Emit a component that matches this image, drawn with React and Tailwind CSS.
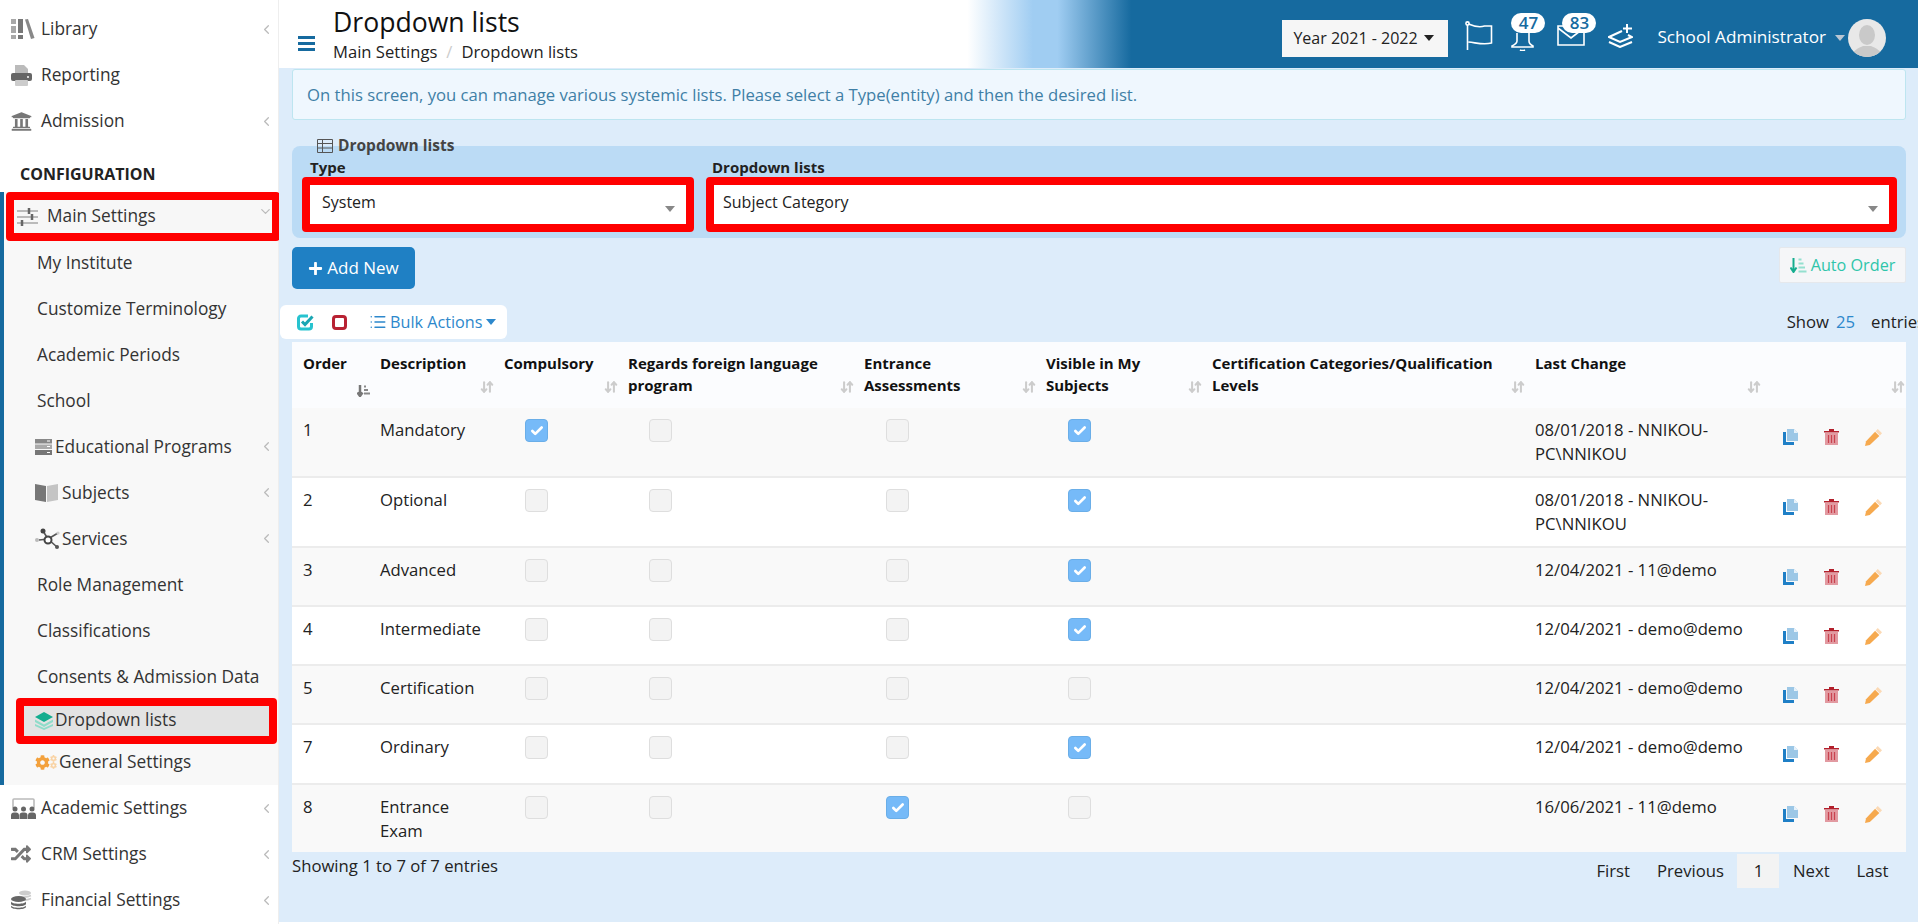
import { ChevronLeft, ChevronDown, Check, List, ArrowDownUp } from "lucide-react";
import { FaUniversity, FaRandom, FaPlus, FaCog } from "react-icons/fa";

const rows = [
  { order: 1, desc: "Mandatory", compulsory: true, visible: true, change: "08/01/2018 - NNIKOU- PC\\NNIKOU", h: "h-[69px]" },
  { order: 2, desc: "Optional", visible: true, change: "08/01/2018 - NNIKOU- PC\\NNIKOU", h: "h-[70px]" },
  { order: 3, desc: "Advanced", visible: true, change: "12/04/2021 - 11@demo", h: "h-[59px]" },
  { order: 4, desc: "Intermediate", visible: true, change: "12/04/2021 - demo@demo", h: "h-[59px]" },
  { order: 5, desc: "Certification", change: "12/04/2021 - demo@demo", h: "h-[59px]" },
  { order: 7, desc: "Ordinary", visible: true, change: "12/04/2021 - demo@demo", h: "h-[60px]" },
  { order: 8, desc: "Entrance Exam", entrance: true, change: "16/06/2021 - 11@demo", h: "h-[68px]" },
];

const headers = [
  { label: "Order", cls: "pl-[11px]", active: true },
  { label: "Description" },
  { label: "Compulsory" },
  { label: "Regards foreign language program" },
  { label: "Entrance Assessments" },
  { label: "Visible in My Subjects" },
  { label: "Certification Categories/Qualification Levels" },
  { label: "Last Change" },
  { label: "" },
];

function Box({ on }) {
  return on ? (
    <span className="flex size-[23px] items-center justify-center rounded-[4px] border border-[#6aaee8] bg-[#76baf8] text-white">
      <Check size={14} strokeWidth={4.5} />
    </span>
  ) : (
    <span className="block size-[23px] rounded-[4px] border border-[#dedede] bg-[#f3f3f3]" />
  );
}

function LibraryIcon() {
  return (
    <svg width="24" height="22" viewBox="0 0 24 22">
      <rect x="0" y="1" width="5" height="20" fill="#a8a8a8" />
      <rect x="0" y="6" width="5" height="2" fill="#fff" />
      <rect x="0" y="15" width="5" height="2" fill="#fff" />
      <rect x="7" y="1" width="5" height="20" fill="#777" />
      <rect x="7" y="15" width="5" height="2" fill="#fff" />
      <path d="M14 1.5 17 1 23.5 20 20 21Z" fill="#888" />
    </svg>
  );
}

function PrinterIcon() {
  return (
    <svg width="21" height="21" viewBox="0 0 21 21">
      <path d="M4 0h9l4 4v5H4Z" fill="#bbb" />
      <rect x="0" y="8" width="21" height="8" rx="2" fill="#666" />
      <rect x="4" y="15" width="13" height="6" rx="1" fill="#ccc" />
      <circle cx="17" cy="12" r="1" fill="#fff" />
    </svg>
  );
}

function SlidersIcon() {
  return (
    <svg width="21" height="18" viewBox="0 0 21 18">
      <path d="M0 3h21M0 9h21M0 15h21" stroke="#bbb" strokeWidth="2" />
      <path d="M12 0v6M15 6v6M5 12v6" stroke="#666" strokeWidth="2.5" />
    </svg>
  );
}

function ServerIcon() {
  return (
    <svg width="17" height="16" viewBox="0 0 17 16">
      <rect y="0" width="17" height="4.5" fill="#888" />
      <rect y="5.5" width="17" height="4.5" fill="#aaa" />
      <rect y="11" width="17" height="5" fill="#777" />
      <path d="M12 2h3M12 7.5h3M12 13.5h3" stroke="#fff" strokeWidth="1" />
    </svg>
  );
}

function BookIcon() {
  return (
    <svg width="23" height="19" viewBox="0 0 23 19">
      <path d="M0 1 11 3v16L0 17Z" fill="#777" />
      <path d="M12 3 23 1v16l-11 2Z" fill="#c4c4c4" />
    </svg>
  );
}

function NodesIcon() {
  return (
    <svg width="25" height="21" viewBox="0 0 25 21">
      <path d="M8 3 13 11 22 19M13 11 4 12M13 11 23 5" stroke="#555" strokeWidth="1.6" fill="none" />
      <circle cx="2" cy="12" r="2" fill="#bbb" />
      <circle cx="8" cy="3" r="2.5" fill="#444" />
      <circle cx="13" cy="12" r="3.5" fill="#fff" stroke="#444" strokeWidth="2" />
      <circle cx="22" cy="19" r="2" fill="#555" />
      <circle cx="23" cy="5" r="1.6" fill="#ccc" />
    </svg>
  );
}

function LayersIcon() {
  return (
    <svg width="18" height="18" viewBox="0 0 18 18">
      <path d="M9 0 18 5 9 10 0 5Z" fill="#14ad8f" />
      <path d="M0 7.500 9 12.500 18 7.500V10L9 15 0 10Z" fill="#8fdcc9" />
      <path d="M0 12 9 16 18 12V14L9 18 0 14Z" fill="#8fdcc9" />
    </svg>
  );
}

function GearsIcon() {
  return (
    <span className="flex items-center">
      <FaCog size={15} className="text-[#f3a13c]" />
      <span className="flex flex-col">
        <FaCog size={7} className="text-[#f9d3a4]" />
        <FaCog size={7} className="text-[#f9d3a4]" />
      </span>
    </span>
  );
}

function GroupIcon() {
  return (
    <svg width="25" height="21" viewBox="0 0 25 21">
      <path d="M2 10V2a1 1 0 0 1 1-1h19a1 1 0 0 1 1 1v8" fill="none" stroke="#bbb" strokeWidth="1.6" />
      {[4, 12.5, 21].map((x) => (
        <g key={x} fill="#666">
          <circle cx={x} cy="11" r="2.5" />
          <path d={`M${x - 4} 21v-3.5a3 3 0 0 1 3-3h2a3 3 0 0 1 3 3V21Z`} />
        </g>
      ))}
    </svg>
  );
}

function CoinsIcon() {
  return (
    <svg width="21" height="20" viewBox="0 0 21 20">
      <ellipse cx="14" cy="3" rx="6" ry="2.5" fill="#ccc" />
      <path d="M8 6.500c2 1 8 1 12-1M8 9.500c2 1 8 1 12-1" stroke="#ccc" strokeWidth="1.6" fill="none" />
      <ellipse cx="7.500" cy="9" rx="7.500" ry="3" fill="#666" />
      <path d="M0 11.500c1 3 14 3 15 0v2.500c-1 3-14 3-15 0ZM0 15.500c1 3 14 3 15 0V17c-1 3-14 3-15 0Z" fill="#666" />
    </svg>
  );
}

function CopyIcon() {
  return (
    <svg width="15" height="16" viewBox="0 0 15 16">
      <path d="M0 3h3v10h8v3H0Z" fill="#1f7fc6" />
      <path d="M4 0h7l4 4v8H4Z" fill="#9cc7e6" />
      <path d="M11 0l4 4h-4Z" fill="#e8f2fa" />
    </svg>
  );
}

function TrashIcon() {
  return (
    <svg width="15" height="16" viewBox="0 0 15 16">
      <path d="M0 2h5V0h5v2h5v1.600H0Z" fill="#b3202c" />
      <path d="M1 4h13v12H1Z" fill="#e29aa1" />
      <path d="M4.500 6v8M7.500 6v8M10.500 6v8" stroke="#c9434f" strokeWidth="1.2" />
    </svg>
  );
}

function PencilIcon() {
  return (
    <svg width="17" height="17" viewBox="0 0 16 16">
      <path d="M12 0l4 4-2 2-4-4Z" fill="#fbd9b5" />
      <path d="M9.500 2.500l4 4L4.500 15 0 16l1-4.500Z" fill="#f6a94e" />
    </svg>
  );
}

function BulkCheck() {
  return (
    <svg width="17" height="17" viewBox="0 0 17 17" fill="none">
      <path d="M11 2H4a2.500 2.500 0 0 0-2.500 2.500v8A2.500 2.500 0 0 0 4 15h8a2.500 2.500 0 0 0 2.500-2.500V9" stroke="#27c3cf" strokeWidth="3" />
      <path d="M5 7.500 8 10.500 15.500 2.500" stroke="#1aa6b3" strokeWidth="3" />
    </svg>
  );
}

function SortDown() {
  return (
    <svg width="13" height="12" viewBox="0 0 13 12">
      <path d="M3 0v10M0.500 7.500 3 11l2.500-3.500" stroke="#777" strokeWidth="2.500" fill="none" />
      <path d="M7 1.500h2M7 5h4M7 8.500h6" stroke="#888" strokeWidth="2" />
    </svg>
  );
}

function AutoOrderIcon() {
  return (
    <svg width="17" height="15" viewBox="0 0 17 15">
      <path d="M3.500 0v13M0.500 9.500 3.500 14l3-4.500" stroke="#14ad8f" strokeWidth="2" fill="none" />
      <path d="M8.500 1.500h3M8.500 5.500h5M8.500 9.500h6.500M8.500 13.500h8" stroke="#94e0cf" strokeWidth="1.800" />
    </svg>
  );
}

function Caret({ cls }) {
  return <span className={`h-0 w-0 border-x-[5px] border-t-[6px] border-x-transparent ${cls}`} />;
}

function TopItem({ label, icon, chevron }) {
  return (
    <div className="flex h-[46px] items-center pl-[11px]">
      <span className="flex w-[30px] shrink-0 items-center">{icon}</span>
      <span>{label}</span>
      {chevron && <ChevronLeft size={15} className="ml-auto mr-[4px] text-[#bbb]" />}
    </div>
  );
}

function SubItem({ label, icon, chevron, textGap = "w-[20px]" }) {
  return (
    <div className="flex h-[46px] items-center pl-[31px]">
      {icon ? (
        <span className={`flex shrink-0 items-center ${textGap}`}>{icon}</span>
      ) : (
        <span className="w-[2px]" />
      )}
      <span>{label}</span>
      {chevron && <ChevronLeft size={15} className="ml-auto mr-[4px] text-[#bbb]" />}
    </div>
  );
}

function Sidebar() {
  return (
    <aside className="w-[279px] shrink-0 border-r border-[#eee] pt-[6px] text-[17.3px] text-[#333]">
      <TopItem label="Library" icon={<LibraryIcon />} chevron />
      <TopItem label="Reporting" icon={<PrinterIcon />} />
      <TopItem label="Admission" icon={<FaUniversity size={21} className="text-[#777]" />} chevron />
      <div className="flex h-[48px] items-center pl-[20px] pt-[12px] text-[16px] font-bold text-[#222]">CONFIGURATION</div>

      <div className="h-[593px] border-l-4 border-[#166a9f] bg-[#f8f8f8]">
        <div className="ml-[2px] mr-[-2px] flex h-[49px] items-center rounded-[4px] border-[8px] border-[#ff0000] bg-[#f7f7f7] pl-[3px]">
          <span className="w-[30px]"><SlidersIcon /></span>
          <span className="-translate-y-[1px]">Main Settings</span>
          <ChevronDown size={15} className="ml-auto mr-[-1px] -translate-y-[5px] text-[#bbb]" />
        </div>
        <div className="-mt-[1.5px]">
          <SubItem label="My Institute" />
          <SubItem label="Customize Terminology" />
          <SubItem label="Academic Periods" />
          <SubItem label="School" />
          <SubItem label="Educational Programs" icon={<ServerIcon />} chevron />
          <SubItem label="Subjects" icon={<BookIcon />} textGap="w-[27px]" chevron />
          <SubItem label="Services" icon={<NodesIcon />} textGap="w-[27px]" chevron />
          <SubItem label="Role Management" />
          <SubItem label="Classifications" />
          <SubItem label="Consents & Admission Data" />
        </div>
        <div className="ml-[12px] -mt-[1.5px] flex h-[46px] w-[261px] items-center rounded-[4px] border-[8px] border-[#ff0000] bg-[#e3e3e3] pl-[11px]">
          <span className="w-[20px]"><LayersIcon /></span>
          <span className="-translate-y-[1px]">Dropdown lists</span>
        </div>
        <div className="flex h-[40px] items-center pb-[4px] pl-[31px]">
          <span className="w-[24px]"><GearsIcon /></span>
          <span>General Settings</span>
        </div>
      </div>

      <TopItem label="Academic Settings" icon={<GroupIcon />} chevron />
      <TopItem label="CRM Settings" icon={<FaRandom size={20} className="text-[#777]" />} chevron />
      <TopItem label="Financial Settings" icon={<CoinsIcon />} chevron />
    </aside>
  );
}

function Header() {
  return (
    <header className="flex h-[68px] items-center bg-[linear-gradient(90deg,#fff_42%,#a0cdf2_46%,#a0cdf2_47.5%,#166a9f_52%)] pl-[19px]">
      <div className="mt-[18px] flex h-[15px] w-[17px] flex-col justify-between">
        <span className="h-[3px] bg-[#166a9f]" />
        <span className="h-[3px] bg-[#166a9f]" />
        <span className="h-[3px] bg-[#166a9f]" />
      </div>
      <div className="ml-[18px] flex h-full flex-col">
        <h1 className="mt-[4px] text-[26.6px] leading-[36px] text-[#111]">Dropdown lists</h1>
        <div className="flex text-[16.6px] leading-[24px] text-[#222]">
          <span>Main Settings</span>
          <span className="px-[9px] text-[#ccc]">/</span>
          <span>Dropdown lists</span>
        </div>
      </div>
      <div className="ml-auto mt-[8px] flex items-center pr-[32px]">
        <div className="flex h-[37px] w-[166px] items-center justify-between bg-[#f6f6f6] pl-[11px] pr-[14px] text-[16px] text-[#222]">
          <span>Year 2021 - 2022</span>
          <Caret cls="border-t-[#222]" />
        </div>
        <svg width="28" height="29" viewBox="0 0 28 29" className="ml-[17px] -mt-[6px]" fill="none" stroke="#fff" strokeWidth="1.6">
          <circle cx="2.500" cy="2.500" r="1.6" />
          <path d="M2.500 4v25M3.500 3c7 3 13 3 16 2l7 0v17c-8 2-14 0-23-1" />
        </svg>
        <div className="relative ml-[17px] h-[28px] w-[36px]">
          <svg width="25" height="21" viewBox="0 0 25 21" className="mt-[6px]" fill="none" stroke="#fff" strokeWidth="1.6">
            <path d="M7 3v8c0 2-3 4-5 5v1h21v-1c-2-1-4-3-4-5V3M10 20c2 1 3 1 5 0" />
          </svg>
          <span className="absolute left-[1px] top-[-11px] flex h-[20px] w-[34px] items-center justify-center rounded-full bg-white text-[17px] font-semibold text-[#166a9f]">47</span>
        </div>
        <div className="relative ml-[11px] h-[28px] w-[39px]">
          <svg width="28" height="21" viewBox="0 0 28 21" className="mt-[1px]" fill="none" stroke="#fff" strokeWidth="1.6">
            <path d="M1 1h26v19H1ZM1 3l13 10L27 3" />
          </svg>
          <span className="absolute left-[5px] top-[-11px] flex h-[20px] w-[34px] items-center justify-center rounded-full bg-white text-[17px] font-semibold text-[#166a9f]">83</span>
        </div>
        <svg width="25" height="24" viewBox="0 0 25 24" className="ml-[12px] -mt-[4px]" fill="none" stroke="#fff" strokeWidth="2">
          <path d="M19 0v9M15 4.500h9M14 7 1 13l11 5 12-5-4-2M1 18l11 5 12-5" />
        </svg>
        <span className="ml-[24px] -mt-[2px] text-[17.2px] text-white">School Administrator</span>
        <Caret cls="ml-[9px] border-t-[#b9c6d3]" />
        <span className="ml-[3px] flex size-[38px] items-end justify-center overflow-hidden rounded-full bg-[#e8e8e8]">
          <svg width="30" height="33" viewBox="0 0 30 33" fill="#c9c9c9">
            <ellipse cx="15" cy="11" rx="8" ry="10" />
            <path d="M0 33c0-7 7-9 11-11h8c4 2 11 4 11 11Z" />
          </svg>
        </span>
      </div>
    </header>
  );
}

function FilterPanel() {
  return (
    <section className="mt-[26px] flow-root h-[92px] rounded-[8px] bg-[#bbdbf5] pl-[10px] pr-[9px]">
      <div className="-mt-[11px] ml-[15px] flex h-[22px] items-center text-[15.5px] font-bold text-[#444]">
        <svg width="16" height="14" viewBox="0 0 16 14" fill="none" stroke="#555" strokeWidth="1" className="mr-[5px]">
          <path d="M.5.500h15v13H.5ZM.5 4.500h15M.5 9h15M5.500 .5v13" />
        </svg>
        Dropdown lists
      </div>
      <div className="grid grid-cols-[392px_1fr] gap-x-[12px]">
        <div className="pl-[8px] text-[15px] font-bold leading-[20px] text-[#222]">Type</div>
        <div className="pl-[6px] text-[15px] font-bold leading-[20px] text-[#222]">Dropdown lists</div>
        <div className="flex h-[55px] items-center justify-between rounded-[4px] border-[8px] border-[#ff0000] bg-white pl-[12px] pr-[11px] text-[16px] text-[#222]">
          <span className="-translate-y-[3px]">System</span>
          <Caret cls="translate-y-[4px] border-t-[#888]" />
        </div>
        <div className="flex h-[55px] items-center justify-between rounded-[4px] border-[8px] border-[#ff0000] bg-white pl-[9px] pr-[11px] text-[16px] text-[#222]">
          <span className="-translate-y-[3px]">Subject Category</span>
          <Caret cls="translate-y-[4px] border-t-[#888]" />
        </div>
      </div>
    </section>
  );
}

function DataTable() {
  return (
    <table className="mt-[3px] w-full table-fixed border-collapse text-[16.7px] leading-[24px] text-[#222]">
      <colgroup>
        <col className="w-[79px]" />
        <col className="w-[124px]" />
        <col className="w-[124px]" />
        <col className="w-[236px]" />
        <col className="w-[182px]" />
        <col className="w-[166px]" />
        <col className="w-[323px]" />
        <col className="w-[236px]" />
        <col className="w-[144px]" />
      </colgroup>
      <thead>
        <tr className="h-[66px] bg-[#fbfcfe]">
          {headers.map((col) => (
            <th key={col.label} className={`p-0 pb-[10px] pt-[10px] text-left align-top text-[15px] font-bold leading-[22px] text-[#111] ${col.cls || "pl-[9px]"}`}>
              <div className="flex h-[45px] items-end justify-between pr-[1px]">
                <span className="self-start">{col.label}</span>
                {col.active ? <SortDown /> : <ArrowDownUp size={14} strokeWidth={3.5} className="mb-[3px] shrink-0 text-[#ccc]" />}
              </div>
            </th>
          ))}
        </tr>
      </thead>
      <tbody>
        {rows.map((row, i) => (
          <tr key={row.order} className={`${row.h} border-t-2 border-[#ececec] first:border-t-0 ${i % 2 === 0 ? "bg-[#f9f9f9]" : "bg-white"}`}>
            <td className="pl-[11px] pr-[9px] pt-[10px] align-top">{row.order}</td>
            <td className="pl-[9px] pr-[9px] pt-[10px] align-top">{row.desc}</td>
            <td className="pl-[30px] pt-[11px] align-top"><Box on={row.compulsory} /></td>
            <td className="pl-[30px] pt-[11px] align-top"><Box /></td>
            <td className="pl-[31px] pt-[11px] align-top"><Box on={row.entrance} /></td>
            <td className="pl-[31px] pt-[11px] align-top"><Box on={row.visible} /></td>
            <td />
            <td className="pl-[9px] pr-[9px] pt-[10px] align-top">{row.change}</td>
            <td className="pl-[21px] pt-[21px] align-top">
              <div className="flex items-start gap-[26px]">
                <CopyIcon />
                <TrashIcon />
                <PencilIcon />
              </div>
            </td>
          </tr>
        ))}
      </tbody>
    </table>
  );
}

export default function App() {
  return (
    <div className="flex h-[924px] overflow-hidden bg-white font-['Open_Sans',sans-serif] text-[16.7px] text-[#222]">
      <Sidebar />
      <main className="h-[922px] min-w-0 flex-1 overflow-hidden bg-[#ddecfa]">
        <Header />
        <div className="pl-[13px] pr-[12px]">
          <div className="mt-[1px] flex h-[51px] items-center rounded-[3px] border border-[#bde5f0] bg-[#eff7fe] pl-[14px] text-[16.7px] text-[#3f7fa6]">
            On this screen, you can manage various systemic lists. Please select a Type(entity) and then the desired list.
          </div>
          <FilterPanel />
          <div className="mt-[9px] flex items-start justify-between">
            <button className="flex h-[42px] w-[123px] items-center justify-center gap-[4px] rounded-[5px] bg-[#1f80c4] text-[17px] text-white">
              <FaPlus size={15} />
              Add New
            </button>
            <button className="flex h-[36px] w-[127px] items-center justify-center gap-[4px] rounded-[2px] border border-[#e5e8ec] bg-[#f5f6f8] text-[16.2px] text-[#2fc5aa]">
              <AutoOrderIcon />
              Auto Order
            </button>
          </div>
          <div className="mt-[16px] flex h-[34px] items-center justify-between">
            <div className="-ml-[12px] flex h-[34px] w-[227px] items-center rounded-[6px] bg-white pl-[17px] text-[16.2px] text-[#2d88cc]">
              <BulkCheck />
              <span className="ml-[18px] block size-[15px] rounded-[4px] border-[3px] border-[#b82233]" />
              <List size={18} className="ml-[22px] mr-[3px]" />
              Bulk Actions
              <Caret cls="ml-[4px] border-t-[#2d88cc]" />
            </div>
            <div className="-mr-[19px] flex items-center text-[16.7px] text-[#222]">
              <span>Show</span>
              <span className="ml-[7px] text-[#2d88cc]">25</span>
              <span className="ml-[16px]">entries</span>
            </div>
          </div>
          <DataTable />
          <div className="mt-[2px] flex items-start justify-between text-[16.7px] text-[#222]">
            <span className="leading-[24px]">Showing 1 to 7 of 7 entries</span>
            <div className="flex h-[34px] items-center pr-[4px]">
              <span className="px-[13.5px]">First</span>
              <span className="px-[13.5px]">Previous</span>
              <span className="flex h-[34px] w-[42px] items-center justify-center bg-[#f3f3f3]">1</span>
              <span className="px-[13.5px]">Next</span>
              <span className="px-[13.5px]">Last</span>
            </div>
          </div>
        </div>
      </main>
    </div>
  );
}
